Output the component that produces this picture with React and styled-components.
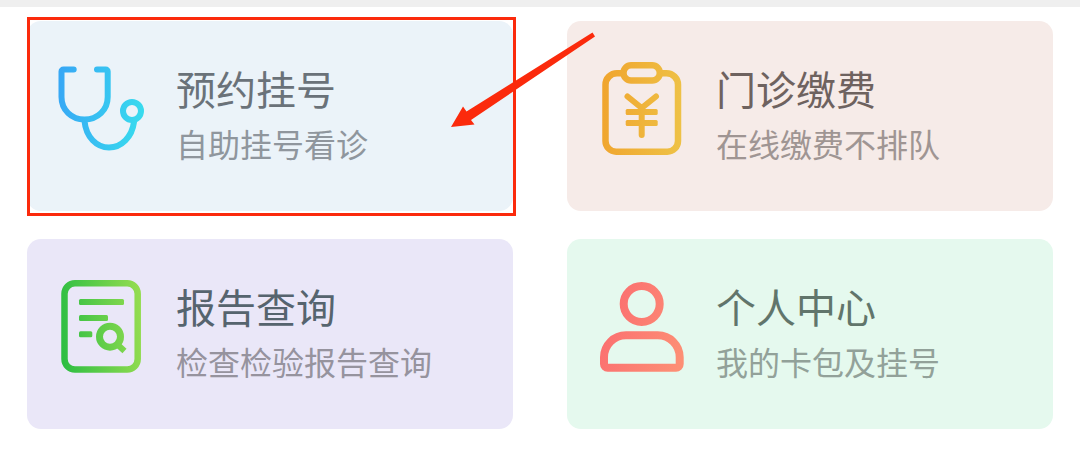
import React from "react";
import styled, { createGlobalStyle } from "styled-components";

const StethoscopeIcon = () => (
  <Icon viewBox="0 0 96 96" aria-hidden="true">
    <defs>
      <linearGradient id="blue" gradientUnits="userSpaceOnUse" x1="5" y1="40" x2="91" y2="50">
        <stop offset="0" stopColor="#37a8f5" />
        <stop offset="1" stopColor="#38dbee" />
      </linearGradient>
    </defs>
    <g fill="none" stroke="url(#blue)" strokeWidth="6" strokeLinecap="round">
      <path d="M20.7 8.5H10.5a2 2 0 0 0-2 2V36c0 13 10 22.500 23 22.500S54.700 49 54.700 36V10.500a2 2 0 0 0-2-2H44" />
      <path d="M31.5 60C33 76 43.500 86.500 56 86.500S79 76 81 61" />
      <circle cx="79" cy="50" r="9" />
    </g>
  </Icon>
);

const PaymentIcon = () => (
  <Icon viewBox="0 0 96 96" aria-hidden="true">
    <defs>
      <linearGradient id="orange" gradientUnits="userSpaceOnUse" x1="9" y1="48" x2="88" y2="52">
        <stop offset="0" stopColor="#f0a52e" />
        <stop offset="1" stopColor="#eec146" />
      </linearGradient>
    </defs>
    <g fill="none" stroke="url(#orange)" strokeWidth="6.5">
      <path d="M30 12.300H24A11.500 11.500 0 0 0 12.500 23.800V80A10.700 10.700 0 0 0 23.200 90.700H74.300A10.700 10.700 0 0 0 85 80V23.800A11.500 11.500 0 0 0 73.500 12.300H67" />
      <rect x="30.5" y="4.3" width="36.3" height="15.2" rx="7.6" />
      <path d="M34.5 35.5L48.700 47L63 35.500M48.700 46V74" strokeWidth="6" strokeLinecap="round" />
    </g>
    <rect x="32.7" y="48" width="32" height="6" rx="1.5" fill="url(#orange)" />
    <rect x="32.7" y="59" width="32" height="6" rx="1.5" fill="url(#orange)" />
  </Icon>
);

const ReportIcon = () => (
  <Icon viewBox="0 0 96 96" aria-hidden="true">
    <defs>
      <linearGradient id="green" gradientUnits="userSpaceOnUse" x1="8" y1="50" x2="88" y2="44">
        <stop offset="0" stopColor="#2ebe43" />
        <stop offset="1" stopColor="#93dc50" />
      </linearGradient>
    </defs>
    <g fill="none" stroke="url(#green)" strokeWidth="6.5">
      <rect x="11.5" y="4.3" width="73.2" height="86.2" rx="10.5" />
      <circle cx="57" cy="57.7" r="10.5" strokeWidth="7" />
      <path d="M65 66L71.5 72" strokeWidth="6" />
    </g>
    <g fill="url(#green)">
      <rect x="26" y="20" width="45" height="6" rx="1.5" />
      <rect x="26" y="36" width="29" height="6" rx="1.5" />
      <rect x="26" y="52.3" width="13.3" height="6" rx="1.5" />
    </g>
  </Icon>
);

const PersonIcon = () => (
  <Icon viewBox="0 0 96 96" aria-hidden="true">
    <defs>
      <linearGradient id="coral" gradientUnits="userSpaceOnUse" x1="8" y1="46" x2="90" y2="74">
        <stop offset="0" stopColor="#fb6f70" />
        <stop offset="1" stopColor="#fd8f75" />
      </linearGradient>
    </defs>
    <g fill="none" stroke="url(#coral)" strokeWidth="8">
      <circle cx="48.7" cy="25" r="18" />
      <path d="M33 56.3H64.700A22 22 0 0 1 86.700 78.300V85A3.700 3.700 0 0 1 83 88.700H14.700A3.700 3.700 0 0 1 11 85V78.300A22 22 0 0 1 33 56.300Z" />
    </g>
  </Icon>
);

const services = [
  {
    title: "预约挂号",
    desc: "自助挂号看诊",
    icon: StethoscopeIcon,
    bg: "#ebf3f9",
    color: "#6a7279",
    sub: "#8f969d",
    marked: true,
  },
  {
    title: "门诊缴费",
    desc: "在线缴费不排队",
    icon: PaymentIcon,
    bg: "#f6ebe8",
    color: "#6e625f",
    sub: "#9f9593",
  },
  {
    title: "报告查询",
    desc: "检查检验报告查询",
    icon: ReportIcon,
    bg: "#eae7f8",
    color: "#56646e",
    sub: "#96939e",
  },
  {
    title: "个人中心",
    desc: "我的卡包及挂号",
    icon: PersonIcon,
    bg: "#e5f9ee",
    color: "#61756b",
    sub: "#92a199",
  },
];

const App = () => {
  return (
    <>
      <GlobalStyle />
      <TopStrip />
      <ServiceGrid>
        {services.map(({ title, desc, icon: ServiceIcon, bg, color, sub, marked }) => (
          <Card href="#" key={title} $bg={bg}>
            <ServiceIcon />
            <CardText>
              <Title $color={color}>{title}</Title>
              <Desc $color={sub}>{desc}</Desc>
            </CardText>
            {marked && (
              <>
                <Marker />
                <Arrow viewBox="0 0 144 95" aria-hidden="true">
                  <path d="M0 95L12 74.500L15.500 79.500L141.500 0.500L144 4.500L20 88L23.500 92.500Z" fill="#fb2a0c" />
                </Arrow>
              </>
            )}
          </Card>
        ))}
      </ServiceGrid>
    </>
  );
};

const GlobalStyle = createGlobalStyle`
  * {
    box-sizing: border-box;
  }

  body {
    margin: 0;
    background: #fff;
    font-family: "Noto Sans CJK SC", sans-serif;
  }
`;

const TopStrip = styled.div`
  height: 7px;
  background: #efefef;
`;

const ServiceGrid = styled.main`
  display: grid;
  grid-template-columns: 1fr 1fr;
  gap: 28px 54px;
  padding: 14px 27px 24px;
`;

const Card = styled.a`
  position: relative;
  display: flex;
  align-items: flex-start;
  gap: 27px;
  padding: 40px 26px;
  border-radius: 14px;
  background: ${({ $bg }) => $bg};
  text-decoration: none;
`;

const Icon = styled.svg`
  flex: none;
  width: 96px;
  height: 96px;
`;

const CardText = styled.div`
  white-space: nowrap;
`;

const Title = styled.h2`
  margin: 0;
  font-size: 40px;
  font-weight: 400;
  line-height: 54px;
  color: ${({ $color }) => $color};
`;

const Desc = styled.p`
  margin: 0;
  font-size: 32px;
  line-height: 56px;
  color: ${({ $color }) => $color};
`;

/* red annotation over the first card */
const Marker = styled.span`
  position: absolute;
  inset: -4px -3px -5px 0;
  border: 3px solid #fb2a0c;
`;

const Arrow = styled.svg`
  position: absolute;
  z-index: 1;
  top: 11px;
  right: -82px;
  width: 144px;
  height: 95px;
`;

export default App;
